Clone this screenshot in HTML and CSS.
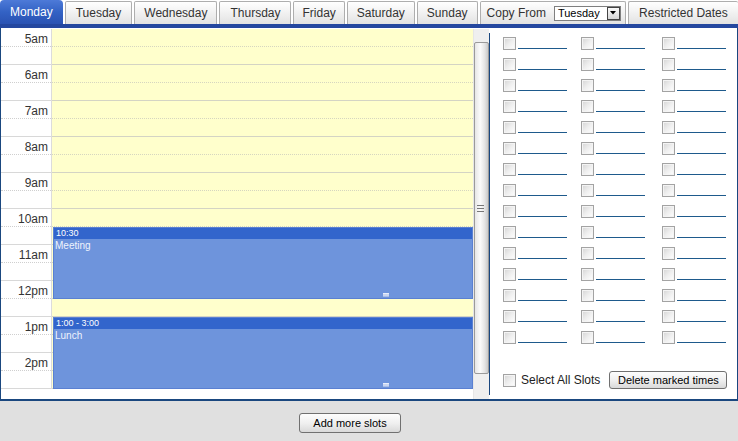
FILE: index.html
```html
<!DOCTYPE html>
<html>
<head>
<meta charset="utf-8">
<link rel="stylesheet" href="styles.css">
</head>
<body>
<div class="app">
  <div class="tabs">
    <div class="tab active">Monday</div>
    <div class="tab wide">Tuesday</div>
    <div class="tab">Wednesday</div>
    <div class="tab wide">Thursday</div>
    <div class="tab narrow">Friday</div>
    <div class="tab">Saturday</div>
    <div class="tab">Sunday</div>
    <div class="tab copy">Copy From
      <span class="select"><span class="sel-text">Tuesday</span><span class="sel-btn"><svg width="6" height="4" viewBox="0 0 6 4"><path d="M0 0H6L3 3.5Z" fill="#000"/></svg></span></span>
    </div>
    <div class="tab last">Restricted Dates</div>
  </div>
  <div class="main">
    <div class="calendar">
      <div class="times">
        <div class="hour"><div class="half top">5am</div><div class="half"></div></div>
        <div class="hour"><div class="half top">6am</div><div class="half"></div></div>
        <div class="hour"><div class="half top">7am</div><div class="half"></div></div>
        <div class="hour"><div class="half top">8am</div><div class="half"></div></div>
        <div class="hour"><div class="half top">9am</div><div class="half"></div></div>
        <div class="hour"><div class="half top">10am</div><div class="half"></div></div>
        <div class="hour"><div class="half top">11am</div><div class="half"></div></div>
        <div class="hour"><div class="half top">12pm</div><div class="half"></div></div>
        <div class="hour"><div class="half top">1pm</div><div class="half"></div></div>
        <div class="hour"><div class="half top">2pm</div><div class="half"></div></div>
      </div>
      <div class="day">
        <div class="hour"><div class="half top"></div><div class="half"></div></div>
        <div class="hour"><div class="half top"></div><div class="half"></div></div>
        <div class="hour"><div class="half top"></div><div class="half"></div></div>
        <div class="hour"><div class="half top"></div><div class="half"></div></div>
        <div class="hour"><div class="half top"></div><div class="half"></div></div>
        <div class="hour"><div class="half top"></div><div class="half"></div></div>
        <div class="hour"><div class="half top"></div><div class="half"></div></div>
        <div class="hour"><div class="half top"></div><div class="half"></div></div>
        <div class="hour"><div class="half top"></div><div class="half"></div></div>
        <div class="hour"><div class="half top"></div><div class="half"></div></div>
        <div class="event" style="top:198px;height:72px">
          <div class="ev-head">10:30</div>
          <div class="ev-body">Meeting</div>
          <span class="handle"></span>
        </div>
        <div class="event" style="top:288px;height:72px">
          <div class="ev-head">1:00 - 3:00</div>
          <div class="ev-body">Lunch</div>
          <span class="handle"></span>
        </div>
      </div>
      <div class="scrollbar">
        <div class="thumb"><span class="grip"></span></div>
      </div>
    </div>
    <div class="slots">
      <div class="slot-grid">
        <div class="slot"><input type="checkbox" class="cb"><span class="blank"></span></div>
        <div class="slot"><input type="checkbox" class="cb"><span class="blank"></span></div>
        <div class="slot"><input type="checkbox" class="cb"><span class="blank"></span></div>
        <div class="slot"><input type="checkbox" class="cb"><span class="blank"></span></div>
        <div class="slot"><input type="checkbox" class="cb"><span class="blank"></span></div>
        <div class="slot"><input type="checkbox" class="cb"><span class="blank"></span></div>
        <div class="slot"><input type="checkbox" class="cb"><span class="blank"></span></div>
        <div class="slot"><input type="checkbox" class="cb"><span class="blank"></span></div>
        <div class="slot"><input type="checkbox" class="cb"><span class="blank"></span></div>
        <div class="slot"><input type="checkbox" class="cb"><span class="blank"></span></div>
        <div class="slot"><input type="checkbox" class="cb"><span class="blank"></span></div>
        <div class="slot"><input type="checkbox" class="cb"><span class="blank"></span></div>
        <div class="slot"><input type="checkbox" class="cb"><span class="blank"></span></div>
        <div class="slot"><input type="checkbox" class="cb"><span class="blank"></span></div>
        <div class="slot"><input type="checkbox" class="cb"><span class="blank"></span></div>
        <div class="slot"><input type="checkbox" class="cb"><span class="blank"></span></div>
        <div class="slot"><input type="checkbox" class="cb"><span class="blank"></span></div>
        <div class="slot"><input type="checkbox" class="cb"><span class="blank"></span></div>
        <div class="slot"><input type="checkbox" class="cb"><span class="blank"></span></div>
        <div class="slot"><input type="checkbox" class="cb"><span class="blank"></span></div>
        <div class="slot"><input type="checkbox" class="cb"><span class="blank"></span></div>
        <div class="slot"><input type="checkbox" class="cb"><span class="blank"></span></div>
        <div class="slot"><input type="checkbox" class="cb"><span class="blank"></span></div>
        <div class="slot"><input type="checkbox" class="cb"><span class="blank"></span></div>
        <div class="slot"><input type="checkbox" class="cb"><span class="blank"></span></div>
        <div class="slot"><input type="checkbox" class="cb"><span class="blank"></span></div>
        <div class="slot"><input type="checkbox" class="cb"><span class="blank"></span></div>
        <div class="slot"><input type="checkbox" class="cb"><span class="blank"></span></div>
        <div class="slot"><input type="checkbox" class="cb"><span class="blank"></span></div>
        <div class="slot"><input type="checkbox" class="cb"><span class="blank"></span></div>
        <div class="slot"><input type="checkbox" class="cb"><span class="blank"></span></div>
        <div class="slot"><input type="checkbox" class="cb"><span class="blank"></span></div>
        <div class="slot"><input type="checkbox" class="cb"><span class="blank"></span></div>
        <div class="slot"><input type="checkbox" class="cb"><span class="blank"></span></div>
        <div class="slot"><input type="checkbox" class="cb"><span class="blank"></span></div>
        <div class="slot"><input type="checkbox" class="cb"><span class="blank"></span></div>
        <div class="slot"><input type="checkbox" class="cb"><span class="blank"></span></div>
        <div class="slot"><input type="checkbox" class="cb"><span class="blank"></span></div>
        <div class="slot"><input type="checkbox" class="cb"><span class="blank"></span></div>
        <div class="slot"><input type="checkbox" class="cb"><span class="blank"></span></div>
        <div class="slot"><input type="checkbox" class="cb"><span class="blank"></span></div>
        <div class="slot"><input type="checkbox" class="cb"><span class="blank"></span></div>
        <div class="slot"><input type="checkbox" class="cb"><span class="blank"></span></div>
        <div class="slot"><input type="checkbox" class="cb"><span class="blank"></span></div>
        <div class="slot"><input type="checkbox" class="cb"><span class="blank"></span></div>
      </div>
      <div class="select-all">
        <input type="checkbox" class="cb">
        <span class="sa-label">Select All Slots</span>
        <button class="btn">Delete marked times</button>
      </div>
    </div>
  </div>
  <div class="footer">
    <button class="btn add">Add more slots</button>
  </div>
</div>
</body>
</html>
```
FILE: styles.css
```css
* { box-sizing: border-box; }
html, body { margin: 0; padding: 0; }
body {
  font-family: "Liberation Sans", Arial, sans-serif;
  background: #fff;
  width: 738px;
  height: 441px;
  overflow: hidden;
}
.app { width: 738px; }

/* tabs */
.tabs {
  display: flex;
  align-items: flex-end;
  gap: 2px;
  height: 28px;
  border-bottom: 4px solid #24479f;
  background: #fff;
}
.tab {
  height: 23px;
  padding: 0 9px;
  border: 1px solid #aeaeae;
  border-bottom: none;
  border-radius: 2px 2px 0 0;
  background: linear-gradient(#ffffff, #f4f4f4 40%, #e2e2e2);
  color: #333;
  font-size: 12px;
  line-height: 22px;
  white-space: nowrap;
  display: flex;
  align-items: center;
}
.tab.wide { padding: 0 10px; }
.tab.narrow { padding: 0 8px; }
.tab.active {
  height: 24px;
  border: none;
  padding: 0 10px;
  border-radius: 4px 4px 0 0;
  background: linear-gradient(#4d7ad8, #3362c4 50%, #2a52b2);
  color: #fff;
}
.tab.copy { padding: 0 4px 0 6px; gap: 8px; }
.tab.last { flex: 1; justify-content: center; border-right: none; }
.select {
  display: flex;
  align-items: center;
  width: 67px;
  height: 15px;
  border: 1px solid #7f7f7f;
  background: #fff;
  padding: 0 0 0 3px;
}
.sel-text { flex: 1; font-size: 11px; color: #000; line-height: 13px; }
.sel-btn {
  width: 13px;
  height: 13px;
  border: 1px solid #444;
  background: linear-gradient(#fafafa, #d6d6d6);
  display: flex;
  align-items: center;
  justify-content: center;
}

/* main */
.main {
  display: flex;
  height: 373px;
  border: 1px solid #1a477f;
  border-top: none;
  border-bottom-width: 2px;
  background: #fff;
}
.calendar {
  display: flex;
  padding-top: 1px;
  width: 488px;
}
.times {
  width: 51px;
  height: 360px;
  border-right: 1px solid #dcdcdc;
  background: #fff;
}
.hour { height: 36px; }
.half {
  height: 18px;
  border-bottom: 1px solid #d8d8d8;
}
.half.top {
  border-bottom: 1px dotted #cfcfcf;
}
.times .half.top {
  text-align: right;
  padding-right: 3px;
  padding-top: 1px;
  font-size: 12px;
  line-height: 18px;
  color: #333;
}
.day {
  position: relative;
  width: 421px;
  height: 360px;
  background: #ffffcc;
}
.day .half { border-bottom-color: #d4d4c4; }
.day .half.top { border-bottom-color: #d6d6c0; }

.event {
  position: absolute;
  left: 1px;
  right: 0;
  background: #6e94dc;
  border: 1px solid #5a80d2;
  color: #eef3fc;
}
.ev-head {
  height: 11px;
  background: #3265cc;
  color: #fff;
  font-size: 9px;
  line-height: 11px;
  padding-left: 2px;
}
.ev-body {
  font-size: 10px;
  line-height: 12px;
  padding: 1px 1px;
}
.handle {
  position: absolute;
  left: 329px;
  bottom: 1px;
  width: 6px;
  height: 4px;
  background: #c9d6f2;
  border-top: 1px solid #e8eefa;
  border-bottom: 1px solid #a8bde6;
}

/* scrollbar */
.scrollbar {
  width: 16px;
  background: #efefef;
  border-left: 1px solid #e6e6e6;
  padding: 13px 0 0 0;
}
.thumb {
  width: 15px;
  height: 332px;
  border: 1px solid #9a9a9a;
  border-radius: 2px;
  background: linear-gradient(90deg, #e6e6e6, #fbfbfb 40%, #e4e4e4 75%, #c9c9c9);
  display: flex;
  align-items: center;
  justify-content: center;
}
.grip {
  width: 7px;
  height: 7px;
  margin-left: -2px;
  background: repeating-linear-gradient(#777 0 1px, transparent 1px 3px);
}

/* slots panel */
.slots {
  flex: 1;
  margin: 5px 0 4px;
  border-left: 1px solid #1a477f;
  padding: 4px 0 0 13px;
}
.slot-grid {
  display: grid;
  grid-template-columns: 78px 81px 1fr;
  grid-auto-rows: 21px;
}
.slot {
  display: flex;
  align-items: flex-start;
  gap: 2px;
}
.cb {
  appearance: none;
  -webkit-appearance: none;
  margin: 0;
  width: 13px;
  height: 13px;
  border: 1px solid #a3a3a3;
  background: linear-gradient(135deg, #d4d4d4, #eeeeee 50%, #ffffff);
  box-shadow: inset 0 0 0 1px #f4f4f4;
  flex: none;
}
.blank {
  width: 49px;
  height: 12px;
  border-bottom: 1px solid #1e5a8c;
}
.select-all {
  display: flex;
  align-items: center;
  height: 18px;
  margin-top: 19px;
}
.sa-label {
  margin-left: 5px;
  font-size: 12px;
  color: #222;
}
.btn {
  font-family: "Liberation Sans", Arial, sans-serif;
  font-size: 11px;
  color: #000;
  border: 1px solid #707070;
  border-radius: 3px;
  background: linear-gradient(#fdfdfd, #f0f0f0 50%, #d9d9d9);
  padding: 0 5px;
  height: 18px;
  line-height: 16px;
}
.select-all .btn { margin-left: 9px; width: 118px; }

.footer {
  height: 40px;
  background: #e0e0e0;
  padding: 12px 0 0 299px;
}
.btn.add { width: 102px; height: 20px; }
```
